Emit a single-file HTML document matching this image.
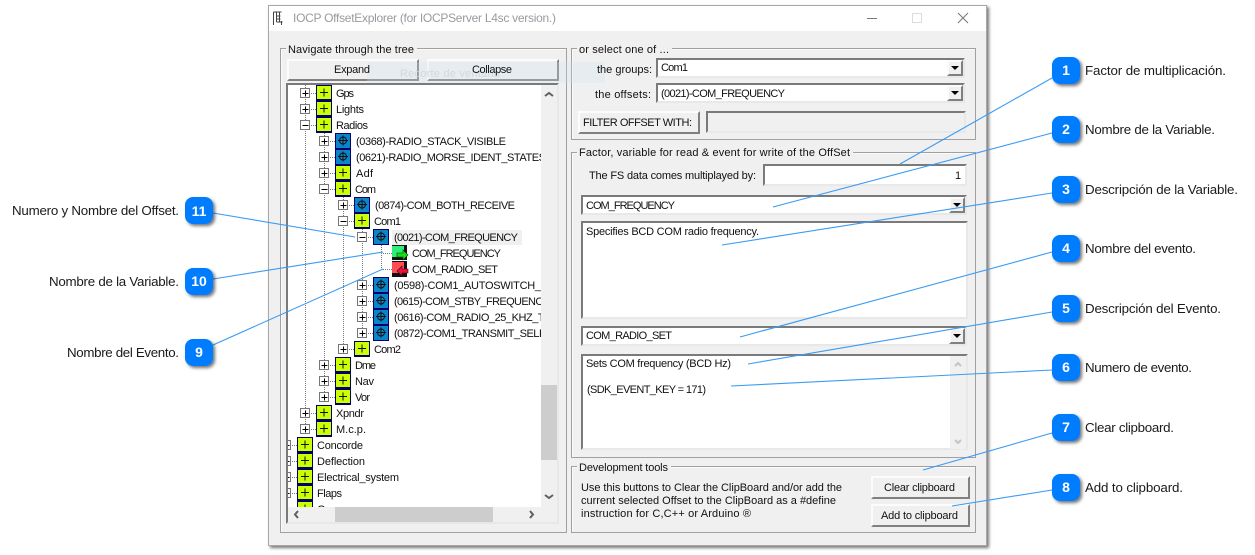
<!DOCTYPE html>
<html><head><meta charset="utf-8"><title>IOCP OffsetExplorer</title>
<style>
html,body{margin:0;padding:0;background:#fff;width:1255px;height:555px;overflow:hidden}
.a{position:absolute;box-sizing:border-box}
.win{left:268px;top:5px;width:719px;height:541px;background:#f0f0f0;border:1px solid #a8a8a8;box-shadow:2px 2px 3px #777}
.tb{left:269px;top:6px;width:717px;height:25px;background:#fff}
.g{border:1px solid #a0a0a0;box-shadow:inset 1px 1px 0 #fafafa}
.s{border:2px solid;border-color:#7a7a7a #e8e8e8 #e8e8e8 #7a7a7a;background:#fff}
.b{border:2px solid;border-color:#fcfcfc #808080 #808080 #fcfcfc;background:#f0f0f0}
svg{position:absolute;left:0;top:0}
text{font-family:"Liberation Sans",Arial,sans-serif;font-size:11px;fill:#111}
.c text{font-size:13.33px;fill:#1a1a1a}
.n{font-weight:bold;fill:#fff!important;font-size:14px!important}
</style></head><body>
<div class="a win"></div><div class="a tb"></div>
<div class="a g" style="left:280px;top:48px;width:287px;height:485px"></div>
<div class="a g" style="left:571px;top:48px;width:405px;height:92px"></div>
<div class="a g" style="left:571px;top:152px;width:405px;height:306px"></div>
<div class="a g" style="left:571px;top:466px;width:405px;height:67px"></div>
<div class="a b" style="left:287px;top:59px;width:132px;height:22px"></div>
<div class="a b" style="left:427px;top:59px;width:132px;height:22px"></div>
<div class="a s" style="left:286px;top:83px;width:273px;height:441px"></div>
<div class="a" style="left:541px;top:85px;width:16px;height:437px;background:#f0f0f0"></div>
<div class="a" style="left:288px;top:507px;width:269px;height:15px;background:#f0f0f0"></div>
<div class="a" style="left:541px;top:385px;width:16px;height:75px;background:#cdcdcd"></div>
<div class="a" style="left:335px;top:507px;width:158px;height:15px;background:#cdcdcd"></div>
<div class="a s" style="left:656px;top:58px;width:309px;height:20px"></div>
<div class="a b" style="left:947px;top:60px;width:16px;height:16px"></div>
<div class="a s" style="left:656px;top:83px;width:309px;height:20px"></div>
<div class="a b" style="left:947px;top:85px;width:16px;height:16px"></div>
<div class="a b" style="left:578px;top:111px;width:122px;height:23px"></div>
<div class="a s" style="left:706px;top:111px;width:260px;height:22px;background:#f0f0f0"></div>
<div class="a s" style="left:763px;top:164px;width:204px;height:22px"></div>
<div class="a s" style="left:581px;top:195px;width:386px;height:20px"></div>
<div class="a b" style="left:949px;top:197px;width:16px;height:16px"></div>
<div class="a s" style="left:581px;top:221px;width:387px;height:98px"></div>
<div class="a s" style="left:581px;top:326px;width:386px;height:20px"></div>
<div class="a b" style="left:949px;top:328px;width:16px;height:16px"></div>
<div class="a s" style="left:581px;top:354px;width:387px;height:96px"></div>
<div class="a" style="left:950px;top:356px;width:16px;height:93px;background:#f0f0f0"></div>
<div class="a b" style="left:871px;top:476px;width:99px;height:23px"></div>
<div class="a b" style="left:871px;top:504px;width:99px;height:23px"></div>
<div class="a" style="left:392px;top:230px;width:130px;height:15px;background:#f0f0f0"></div>

<svg width="1255" height="555" viewBox="0 0 1255 555">
<defs>
<clipPath id="tc"><rect x="288" y="85" width="253" height="422"/></clipPath>
<g id="y" shape-rendering="crispEdges"><rect width="16" height="16" fill="#000070"/><rect x="1" y="1" width="14" height="13" fill="#ccff00"/><path d="M4 7.5h8M8 3.5v8" stroke="#111" fill="none"/></g>
<g id="o" shape-rendering="crispEdges"><rect width="16" height="16" fill="#000070"/><rect x="1" y="1" width="14" height="14" fill="#0a86c8"/></g>
<g id="t"><use href="#o"/><circle cx="8" cy="7.5" r="3.5" fill="none" stroke="#111"/><path d="M8 2.5v10M3 7.5h10" stroke="#111" fill="none" shape-rendering="crispEdges"/></g>
<g id="p" shape-rendering="crispEdges"><rect x="-4.5" y="-4.5" width="9" height="9" fill="#fff" stroke="#777"/><path d="M-2.5 .5h6M.5 -2.5v6" stroke="#000"/></g>
<g id="m" shape-rendering="crispEdges"><rect x="-4.5" y="-4.5" width="9" height="9" fill="#fff" stroke="#777"/><path d="M-2.5 .5h6" stroke="#000"/></g>
<g id="gv"><rect x="0" y="0" width="15" height="15" fill="#111" shape-rendering="crispEdges"/><rect x="0" y="1" width="12" height="11" fill="#2cee78" shape-rendering="crispEdges"/><path d="M5 8h6V5l5 5-5 5v-3H5z" fill="#14e014" stroke="#0a3a0a" stroke-width=".6"/></g>
<g id="rv"><rect x="0" y="0" width="15" height="16" fill="#111" shape-rendering="crispEdges"/><rect x="0" y="1" width="12" height="11" fill="#ff4d58" shape-rendering="crispEdges"/><path d="M16 8h-6V5L5 10l5 5v-3h6z" fill="#f0103a" stroke="#3a0a0a" stroke-width=".6"/></g>
<path id="tri" d="M-4 -2h8l-4 4z" fill="#000"/>
</defs>

<!-- ghost capture overlay (behind the control captions) -->
<rect x="367" y="62" width="238" height="21" fill="#cfe3f2" opacity=".28"/>
<text x="400" y="77" textLength="100" style="fill:#d4d8da">Recorte de ventana</text>

<!-- app icon -->
<path d="M273.500 12v13M273.500 12h8M276.500 12v10M279.500 12v10M276.500 16h4M276.500 19h4M276.500 22h6M281.500 21v4" stroke="#444" fill="none" shape-rendering="crispEdges"/>
<text x="293" y="22" font-size="12" style="font-size:12px;fill:#9a9aa0" textLength="263">IOCP OffsetExplorer (for IOCPServer L4sc version.)</text>
<path d="M867 18.500h10" stroke="#777" shape-rendering="crispEdges"/>
<rect x="912.500" y="13.500" width="9" height="9" fill="none" stroke="#dcdcdc" shape-rendering="crispEdges"/>
<path d="M958 13l10 10M968 13l-10 10" stroke="#777" fill="none"/>

<!-- legends -->
<g fill="#f0f0f0" shape-rendering="crispEdges"><rect x="286" y="46" width="131" height="5"/><rect x="577" y="46" width="95" height="5"/><rect x="577" y="150" width="276" height="5"/><rect x="577" y="464" width="94" height="5"/></g>
<text x="288" y="53" textLength="126">Navigate through the tree</text>
<text x="334" y="73" textLength="36">Expand</text>
<text x="472" y="73" textLength="40">Collapse</text>
<text x="579" y="53" textLength="90">or select one of ...</text>
<text x="597" y="73" textLength="55">the groups:</text>
<text x="595" y="98" textLength="56">the offsets:</text>
<text x="661" y="71" textLength="27">Com1</text>
<text x="661" y="97" textLength="124">(0021)-COM_FREQUENCY</text>
<text x="583" y="126" textLength="109">FILTER OFFSET WITH:</text>
<text x="579" y="156" textLength="271">Factor, variable for read &amp; event for write of the OffSet</text>
<text x="589" y="179" textLength="167">The FS data comes multiplayed by:</text>
<text x="955" y="179">1</text>
<text x="586" y="209" textLength="89">COM_FREQUENCY</text>
<text x="586" y="235" textLength="173">Specifies BCD COM radio frequency.</text>
<text x="586" y="339" textLength="86">COM_RADIO_SET</text>
<text x="586" y="367" textLength="145">Sets COM frequency (BCD Hz)</text>
<text x="587" y="393" textLength="119">(SDK_EVENT_KEY = 171)</text>
<text x="579" y="471" textLength="89">Development tools</text>
<text x="581" y="491" textLength="261">Use this buttons to Clear the ClipBoard and/or add the</text>
<text x="581" y="504" textLength="255">current selected Offset to the ClipBoard as a #define</text>
<text x="581" y="517" textLength="170">instruction for C,C++ or Arduino ®</text>
<text x="884" y="491" textLength="71">Clear clipboard</text>
<text x="881" y="519" textLength="77">Add to clipboard</text>
<use href="#tri" x="955" y="68"/><use href="#tri" x="955" y="93"/><use href="#tri" x="957" y="205"/><use href="#tri" x="957" y="336"/>
<path d="M955 366l3-3 3 3M955 440l3 3 3-3" stroke="#c4c4c4" stroke-width="2" fill="none"/>

<!-- scrollbar arrows -->
<path d="M545 96l4-3 4 3M545 495l4 3 4-3" stroke="#606060" stroke-width="2" fill="none"/>
<path d="M298 511l-3 3.500 3 3.500M530 511l3 3.500-3 3.500" stroke="#606060" stroke-width="2" fill="none"/>

<!-- tree -->
<g clip-path="url(#tc)">
<path d="M305.500 85V429M324.500 125V397M343.500 189V349M362.500 221V333M381.500 237V269" stroke="#777" stroke-dasharray="1 1" fill="none" shape-rendering="crispEdges"/>
<path d="M286 445.500h11M286 461.500h11M286 477.500h11M286 493.500h11M305 93.500h11M305 109.500h11M305 125.500h11M305 413.500h11M305 429.500h11M324 141.500h11M324 157.500h11M324 173.500h11M324 189.500h11M324 365.500h11M324 381.500h11M324 397.500h11M343 205.500h11M343 221.500h11M343 349.500h11M362 237.500h11M362 285.500h11M362 301.500h11M362 317.500h11M362 333.500h11M381 253.500h11M381 269.500h11" stroke="#777" stroke-dasharray="1 1" fill="none" shape-rendering="crispEdges"/>

<use href="#p" x="305" y="93"/><use href="#p" x="305" y="109"/><use href="#m" x="305" y="125"/><use href="#p" x="305" y="413"/><use href="#p" x="305" y="429"/>
<use href="#p" x="324" y="141"/><use href="#p" x="324" y="157"/><use href="#p" x="324" y="173"/><use href="#m" x="324" y="189"/><use href="#p" x="324" y="365"/><use href="#p" x="324" y="381"/><use href="#p" x="324" y="397"/>
<use href="#p" x="343" y="205"/><use href="#m" x="343" y="221"/><use href="#p" x="343" y="349"/>
<use href="#m" x="362" y="237"/><use href="#p" x="362" y="285"/><use href="#p" x="362" y="301"/><use href="#p" x="362" y="317"/><use href="#p" x="362" y="333"/>
<use href="#p" x="286" y="445"/><use href="#p" x="286" y="461"/><use href="#p" x="286" y="477"/><use href="#p" x="286" y="493"/>

<use href="#y" x="316" y="85"/><use href="#y" x="316" y="101"/><use href="#y" x="316" y="117"/><use href="#y" x="316" y="405"/><use href="#y" x="316" y="421"/>
<use href="#t" x="335" y="133"/><use href="#t" x="335" y="149"/><use href="#y" x="335" y="165"/><use href="#y" x="335" y="181"/><use href="#y" x="335" y="357"/><use href="#y" x="335" y="373"/><use href="#y" x="335" y="389"/>
<use href="#t" x="354" y="197"/><use href="#y" x="354" y="213"/><use href="#y" x="354" y="341"/>
<use href="#t" x="373" y="229"/><use href="#t" x="373" y="277"/><use href="#t" x="373" y="293"/><use href="#t" x="373" y="309"/><use href="#t" x="373" y="325"/>
<use href="#gv" x="392" y="245"/><use href="#rv" x="392" y="261"/>
<use href="#y" x="297" y="437"/><use href="#y" x="297" y="453"/><use href="#y" x="297" y="469"/><use href="#y" x="297" y="485"/><use href="#y" x="297" y="501"/>

<text x="336" y="97" textLength="18">Gps</text>
<text x="336" y="113" textLength="28">Lights</text>
<text x="336" y="129" textLength="32">Radios</text>
<text x="356" y="145" textLength="150">(0368)-RADIO_STACK_VISIBLE</text>
<text x="356" y="161" textLength="190">(0621)-RADIO_MORSE_IDENT_STATES</text>
<text x="356" y="177" textLength="17">Adf</text>
<text x="355" y="193" textLength="21">Com</text>
<text x="375" y="209" textLength="140">(0874)-COM_BOTH_RECEIVE</text>
<text x="374" y="225" textLength="27">Com1</text>
<text x="394" y="241" textLength="124">(0021)-COM_FREQUENCY</text>
<text x="412" y="257" textLength="89">COM_FREQUENCY</text>
<text x="412" y="273" textLength="86">COM_RADIO_SET</text>
<text x="394" y="289" textLength="163">(0598)-COM1_AUTOSWITCH_ON</text>
<text x="394" y="305" textLength="156">(0615)-COM_STBY_FREQUENCY</text>
<text x="394" y="321" textLength="192">(0616)-COM_RADIO_25_KHZ_TUNABLE</text>
<text x="394" y="337" textLength="166">(0872)-COM1_TRANSMIT_SELECT</text>
<text x="374" y="353" textLength="27">Com2</text>
<text x="355" y="369" textLength="21">Dme</text>
<text x="355" y="385" textLength="19">Nav</text>
<text x="355" y="401" textLength="15">Vor</text>
<text x="336" y="417" textLength="28">Xpndr</text>
<text x="336" y="433" textLength="30">M.c.p.</text>
<text x="317" y="449" textLength="46">Concorde</text>
<text x="317" y="465" textLength="48">Deflection</text>
<text x="317" y="481" textLength="82">Electrical_system</text>
<text x="317" y="497" textLength="25">Flaps</text>
<text x="317" y="513" textLength="36">Gauges</text>
</g>

<!-- callout lines -->
<g stroke="#3a9bf2" stroke-width="1.100" fill="none">
<path d="M1052 78L900 164"/><path d="M1052 133L773 207"/><path d="M1052 193L722 245"/><path d="M1052 252L740 337"/><path d="M1052 312L748 364"/><path d="M1052 370L731 386"/><path d="M1052 433L923 470"/><path d="M1052 490L952 506"/>
<path d="M213 213L355 237"/><path d="M213 279L383 252"/><path d="M213 345L383 269"/>
</g>
<filter id="sh" x="-30%" y="-30%" width="170%" height="170%"><feDropShadow dx="2" dy="2" stdDeviation="1.500" flood-color="#000" flood-opacity=".55"/></filter>
<g fill="#007cff" filter="url(#sh)">
<rect x="1052" y="57" width="28" height="27" rx="8"/><rect x="1052" y="116" width="28" height="27" rx="8"/><rect x="1052" y="176" width="28" height="27" rx="8"/><rect x="1052" y="235" width="28" height="27" rx="8"/><rect x="1052" y="295" width="28" height="27" rx="8"/><rect x="1052" y="354" width="28" height="27" rx="8"/><rect x="1052" y="414" width="28" height="27" rx="8"/><rect x="1052" y="474" width="28" height="27" rx="8"/>
<rect x="185" y="197" width="28" height="27" rx="8"/><rect x="185" y="268" width="28" height="27" rx="8"/><rect x="185" y="339" width="28" height="27" rx="8"/>
</g>
<g class="c" text-anchor="middle">
<text class="n" x="1066" y="75">1</text><text class="n" x="1066" y="134">2</text><text class="n" x="1066" y="194">3</text><text class="n" x="1066" y="253">4</text><text class="n" x="1066" y="313">5</text><text class="n" x="1066" y="372">6</text><text class="n" x="1066" y="432">7</text><text class="n" x="1066" y="492">8</text>
<text class="n" x="199" y="216">11</text><text class="n" x="199" y="286">10</text><text class="n" x="199" y="357">9</text>
</g>
<g class="c">
<text x="1085" y="75" textLength="141">Factor de multiplicación.</text>
<text x="1085" y="134" textLength="130">Nombre de la Variable.</text>
<text x="1085" y="194" textLength="153">Descripción de la Variable.</text>
<text x="1085" y="253" textLength="111">Nombre del evento.</text>
<text x="1085" y="313" textLength="136">Descripción del Evento.</text>
<text x="1085" y="372" textLength="107">Numero de evento.</text>
<text x="1085" y="432" textLength="89">Clear clipboard.</text>
<text x="1085" y="492" textLength="98">Add to clipboard.</text>
<text x="12" y="215" textLength="167">Numero y Nombre del Offset.</text>
<text x="49" y="286" textLength="130">Nombre de la Variable.</text>
<text x="67" y="357" textLength="112">Nombre del Evento.</text>
</g>
</svg>
</body></html>
